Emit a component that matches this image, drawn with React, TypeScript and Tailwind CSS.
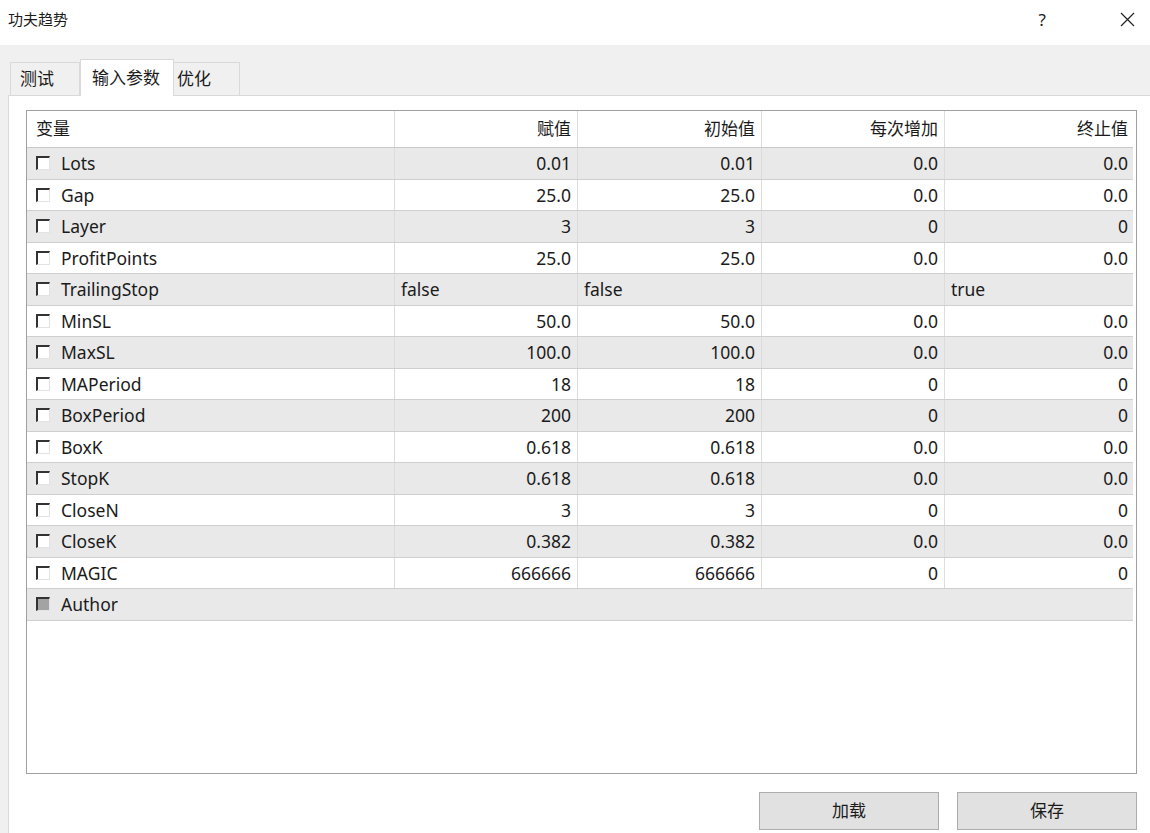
import React from "react"

type Row = {
    name: string
    value: string
    start: string
    step: string
    stop: string
    text?: boolean
    disabled?: boolean
}

const rows: Row[] = [
    { name: "Lots", value: "0.01", start: "0.01", step: "0.0", stop: "0.0" },
    { name: "Gap", value: "25.0", start: "25.0", step: "0.0", stop: "0.0" },
    { name: "Layer", value: "3", start: "3", step: "0", stop: "0" },
    { name: "ProfitPoints", value: "25.0", start: "25.0", step: "0.0", stop: "0.0" },
    { name: "TrailingStop", value: "false", start: "false", step: "", stop: "true", text: true },
    { name: "MinSL", value: "50.0", start: "50.0", step: "0.0", stop: "0.0" },
    { name: "MaxSL", value: "100.0", start: "100.0", step: "0.0", stop: "0.0" },
    { name: "MAPeriod", value: "18", start: "18", step: "0", stop: "0" },
    { name: "BoxPeriod", value: "200", start: "200", step: "0", stop: "0" },
    { name: "BoxK", value: "0.618", start: "0.618", step: "0.0", stop: "0.0" },
    { name: "StopK", value: "0.618", start: "0.618", step: "0.0", stop: "0.0" },
    { name: "CloseN", value: "3", start: "3", step: "0", stop: "0" },
    { name: "CloseK", value: "0.382", start: "0.382", step: "0.0", stop: "0.0" },
    { name: "MAGIC", value: "666666", start: "666666", step: "0", stop: "0" },
    { name: "Author", value: "", start: "", step: "", stop: "", disabled: true },
]

const font = "font-['Noto_Sans','Noto_Sans_CJK_SC',sans-serif]"
const cols = "grid grid-cols-[368px_183px_184px_183px_189px]"

function CheckBox({ disabled }: { disabled?: boolean }) {
    return (
        <span
            className={`inline-block shrink-0 w-[14px] h-[14px] border-t-2 border-l-2 border-t-[#333] border-l-[#333] border-r border-b border-r-[#e3e3e3] border-b-[#e3e3e3] ${disabled ? "bg-[#a3a3a3]" : "bg-white"}`}
        />
    )
}

function Cell({ children, left, last }: { children?: React.ReactNode; left?: boolean; last?: boolean }) {
    return (
        <div className={`flex items-center px-[6px] ${left ? "justify-start" : "justify-end"} ${last ? "" : "border-r border-[#dcdcdc]"}`}>
            {children}
        </div>
    )
}

export default function App() {
    return (
        <div className={`w-[1150px] h-[833px] overflow-hidden bg-[#f0f0f0] text-[#1b1b1b] ${font}`}>
            {/* title bar */}
            <div className="h-[45px] bg-white flex items-center pl-[8px] pr-[15px]">
                <div className="text-[15px] pb-[6px]">功夫趋势</div>
                <div className="ml-auto flex items-center pb-[6px]">
                    <span className="text-[17px] mr-[74px]">?</span>
                    <svg width="15" height="15" viewBox="0 0 15 15">
                        <path d="M1 1 L14 14 M14 1 L1 14" stroke="#222" strokeWidth="1.2" />
                    </svg>
                </div>
            </div>

            {/* tabs */}
            <div className="h-[50px] flex items-end pl-[10px]">
                <div className="h-[33px] w-[70px] border border-b-0 border-[#d9d9d9] bg-[#f0f0f0] flex items-center pl-[9px] text-[17px]">测试</div>
                <div className="h-[37px] w-[94px] border border-b-0 border-[#d9d9d9] bg-white flex items-center pl-[11px] text-[17px] -mb-px relative z-10">输入参数</div>
                <div className="h-[33px] w-[66px] border border-b-0 border-l-0 border-[#d9d9d9] bg-[#f0f0f0] flex items-center pl-[3px] text-[17px]">优化</div>
            </div>

            {/* panel */}
            <div className="ml-[8px] h-[740px] bg-white border-t border-l border-[#d9d9d9] pt-[14px] pl-[17px]">
                <div className="w-[1111px] h-[664px] border border-[#a0a0a0] pr-[3px]">
                    <div className={`${cols} h-[37px] border-b border-[#c9c9c9] text-[17px]`}>
                        <Cell left><span className="pl-[3px]">变量</span></Cell>
                        <Cell>赋值</Cell>
                        <Cell>初始值</Cell>
                        <Cell>每次增加</Cell>
                        <Cell last>终止值</Cell>
                    </div>
                    {rows.map((r, i) => (
                        <div
                            key={r.name}
                            className={`h-[31.5px] border-b border-[#cfcfcf] text-[17.5px] ${i % 2 === 0 ? "bg-[#e9e9e9]" : "bg-white"} ${r.disabled ? "flex" : cols}`}
                        >
                            <div className={`flex items-center gap-[11px] pl-[9px] ${r.disabled ? "" : "border-r border-[#dcdcdc]"}`}>
                                <CheckBox disabled={r.disabled} />
                                <span>{r.name}</span>
                            </div>
                            {!r.disabled && (
                                <>
                                    <Cell left={r.text}>{r.value}</Cell>
                                    <Cell left={r.text}>{r.start}</Cell>
                                    <Cell left={r.text}>{r.step}</Cell>
                                    <Cell left={r.text} last>{r.stop}</Cell>
                                </>
                            )}
                        </div>
                    ))}
                </div>

                <div className="w-[1111px] flex justify-end gap-[18px] mt-[18px]">
                    <button className="w-[180px] h-[38px] bg-[#e1e1e1] border border-[#adadad] text-[17px]">加载</button>
                    <button className="w-[180px] h-[38px] bg-[#e1e1e1] border border-[#adadad] text-[17px]">保存</button>
                </div>
            </div>
        </div>
    )
}
